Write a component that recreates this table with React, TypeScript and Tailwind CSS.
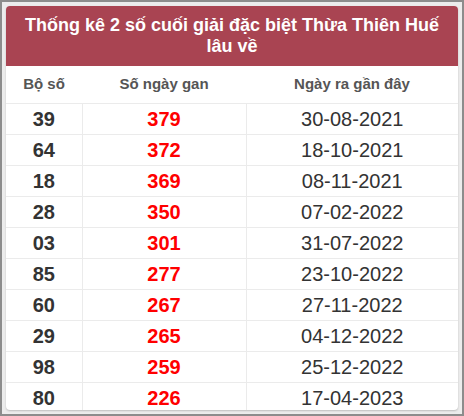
const ROWS = [
  ['39', '379', '30-08-2021'],
  ['64', '372', '18-10-2021'],
  ['18', '369', '08-11-2021'],
  ['28', '350', '07-02-2022'],
  ['03', '301', '31-07-2022'],
  ['85', '277', '23-10-2022'],
  ['60', '267', '27-11-2022'],
  ['29', '265', '04-12-2022'],
  ['98', '259', '25-12-2022'],
  ['80', '226', '17-04-2023'],
]

export default function App() {
  return (
    <div className="w-[464px] h-[416px] border-2 border-[#8c8c8c] bg-[#ececec] p-1 font-['Liberation_Sans',Arial,sans-serif]">
      <div className="h-full rounded-[4px] bg-white overflow-hidden shadow-[0_1px_2px_rgba(0,0,0,0.2)]">
        <div className="h-[60px] bg-[#a94452] text-white font-bold text-[18px] leading-[21px] text-center flex items-center justify-center px-3">
          Thống kê 2 số cuối giải đặc biệt Thừa Thiên Huế lâu về
        </div>
        <table className="w-full border-collapse table-fixed">
          <colgroup>
            <col className="w-[76px]" />
            <col className="w-[164px]" />
            <col />
          </colgroup>
          <thead>
            <tr className="h-[37px] text-[15px] font-bold text-[#555]">
              <th className="font-bold">Bộ số</th>
              <th className="font-bold">Số ngày gan</th>
              <th className="font-bold">Ngày ra gần đây</th>
            </tr>
          </thead>
          <tbody>
            {ROWS.map(([num, days, date]) => (
              <tr key={num} className="h-[31px] border-t border-[#ebebeb] text-[20px] leading-[24px]">
                <td className="text-center font-bold text-[#333] border-r border-[#ebebeb]">{num}</td>
                <td className="text-center font-bold text-[#ff0000] border-r border-[#ebebeb]">{days}</td>
                <td className="text-center text-[#333]">{date}</td>
              </tr>
            ))}
          </tbody>
        </table>
      </div>
    </div>
  )
}
